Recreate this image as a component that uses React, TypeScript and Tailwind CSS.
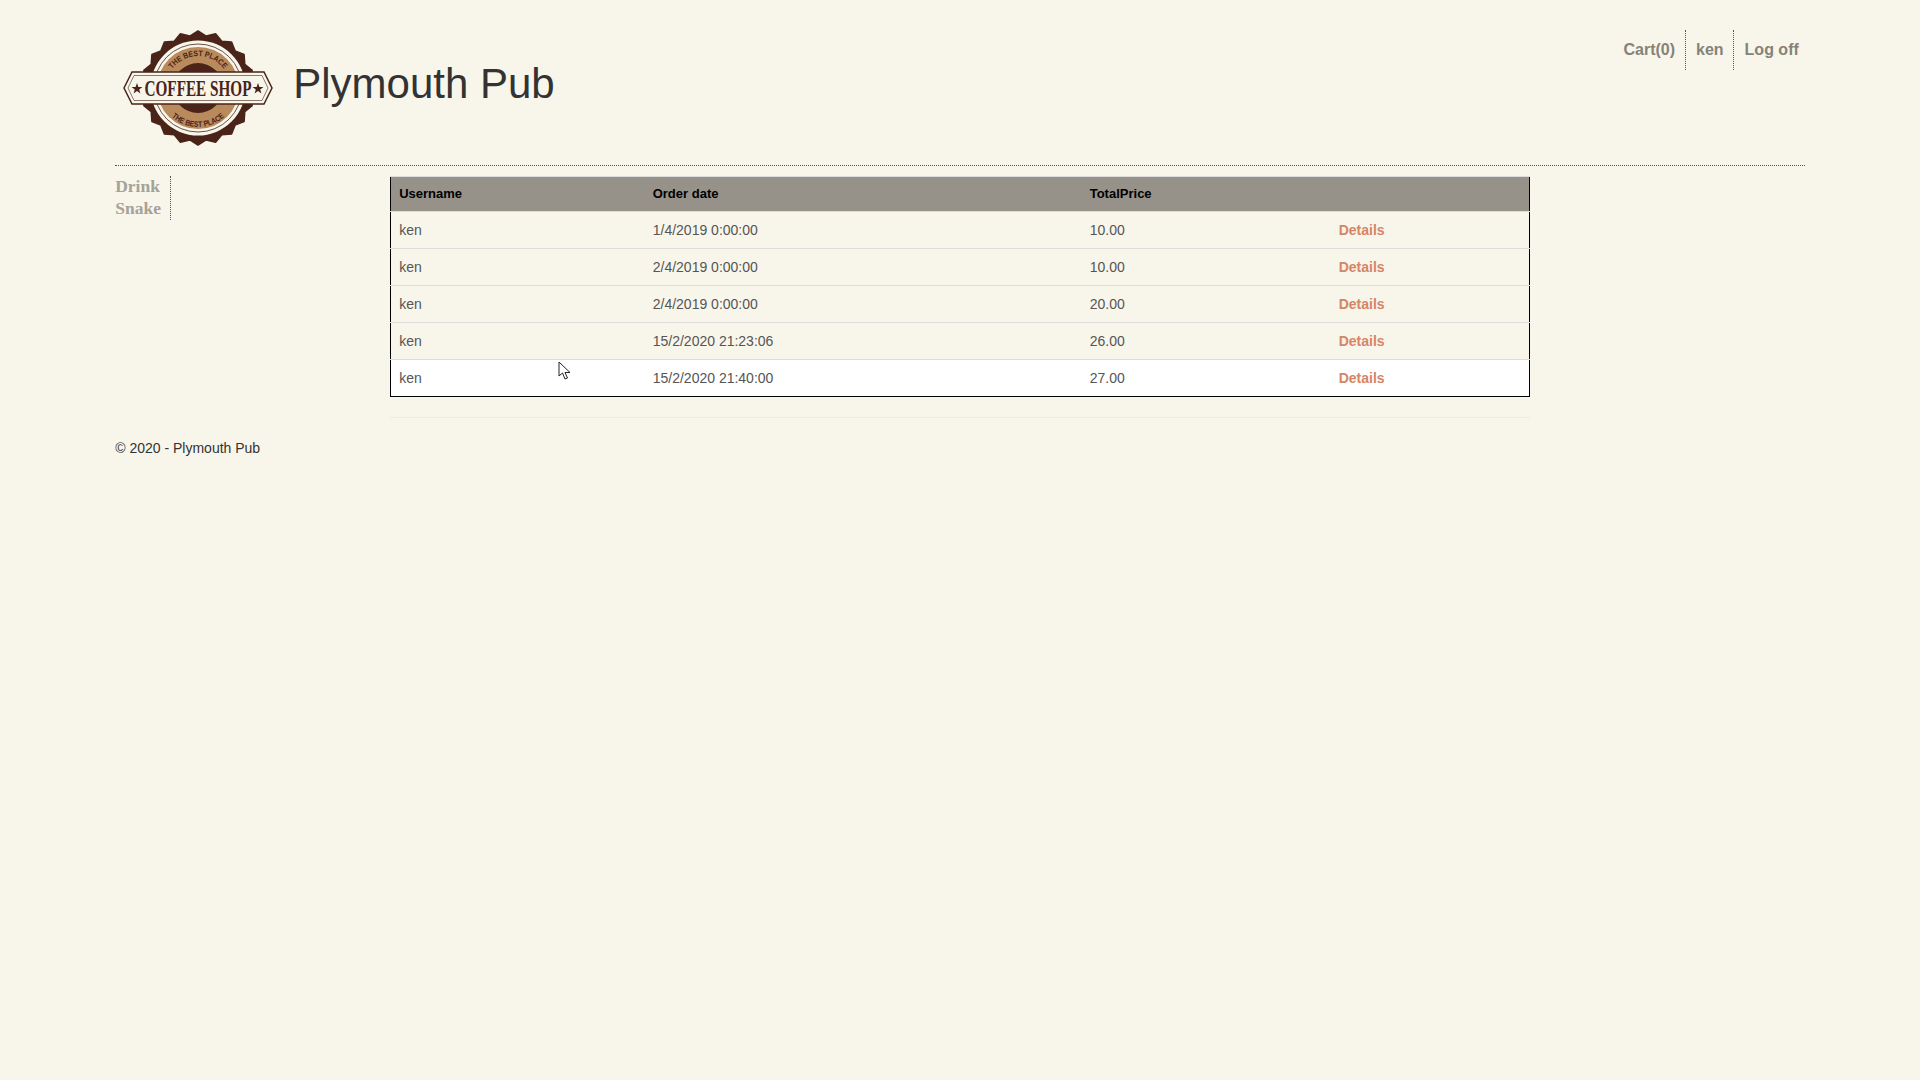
import React from 'react';

const orders = [
  { user: 'ken', date: '1/4/2019 0:00:00', total: '10.00' },
  { user: 'ken', date: '2/4/2019 0:00:00', total: '10.00' },
  { user: 'ken', date: '2/4/2019 0:00:00', total: '20.00' },
  { user: 'ken', date: '15/2/2020 21:23:06', total: '26.00' },
  { user: 'ken', date: '15/2/2020 21:40:00', total: '27.00' },
];

const CoffeeLogo = () => {
  const teeth = Array.from({ length: 40 }, (_, i) => {
    const a = (i / 40) * Math.PI * 2;
    const r = i % 2 === 0 ? 57 : 52.5;
    return `${(75 + Math.cos(a) * r).toFixed(1)},${(58 + Math.sin(a) * r).toFixed(1)}`;
  }).join(' ');
  return (
    <svg width="150" height="118" viewBox="0 0 150 118" className="shrink-0">
      <defs>
        <path id="arcTop" d="M 43 58 A 32 32 0 0 1 107 58" />
        <path id="arcBottom" d="M 36 58 A 39 39 0 0 0 114 58" />
      </defs>
      <polygon points={teeth} fill="#4a2419" stroke="#4a2419" strokeWidth="1.5" strokeLinejoin="round" />
      <circle cx="75" cy="58" r="47.5" fill="#f8f6eb" />
      <circle cx="75" cy="58" r="44" fill="none" stroke="#4a2419" strokeWidth="0.8" />
      <circle cx="75" cy="58" r="41" fill="#b98a5c" />
      <circle cx="75" cy="58" r="25" fill="#4a2419" />
      <text fontFamily="'Liberation Sans', sans-serif" fontWeight="700" fontSize="8" fill="#4a2419">
        <textPath href="#arcTop" startOffset="50%" textAnchor="middle" textLength="60" lengthAdjust="spacingAndGlyphs">THE BEST PLACE</textPath>
      </text>
      <text fontFamily="'Liberation Sans', sans-serif" fontWeight="700" fontSize="8" fill="#4a2419">
        <textPath href="#arcBottom" startOffset="50%" textAnchor="middle" textLength="58" lengthAdjust="spacingAndGlyphs">THE BEST PLACE</textPath>
      </text>
      <polygon points="1,58 9,42 141,42 149,58 141,74 9,74" fill="#f8f6eb" stroke="#4a2419" strokeWidth="1.5" />
      <polygon points="5,58 11,45.5 139,45.5 145,58 139,70.5 11,70.5" fill="none" stroke="#4a2419" strokeWidth="0.6" />
      <text x="75" y="66" textAnchor="middle" fontFamily="'Liberation Serif', serif" fontWeight="700" fontSize="24" fill="#4a2419" textLength="107" lengthAdjust="spacingAndGlyphs">COFFEE SHOP</text>
      <polygon points="14,53 15.4,57 19.5,57 16.2,59.5 17.4,63.5 14,61 10.6,63.5 11.8,59.5 8.5,57 12.6,57" fill="#4a2419" />
      <polygon points="135,53 136.4,57 140.5,57 137.2,59.5 138.4,63.5 135,61 131.6,63.5 132.8,59.5 129.5,57 133.6,57" fill="#4a2419" />
    </svg>
  );
};

const App: React.FC = () => {
  return (
    <div className="relative min-h-[1080px] bg-[#f8f6eb] font-['Liberation_Sans',Arial,sans-serif] text-[14px] text-[#333]">
      <div className="mx-auto w-[88%]">
        <header className="flex h-[166px] justify-between border-b border-dotted border-[#555]">
          <div className="flex items-start pl-2 pt-[30px]">
            <CoffeeLogo />
            <h1 className="ml-[20px] mt-[29px] text-[42px] leading-[50px] text-[#333]">Plymouth Pub</h1>
          </div>
          <nav className="flex items-start pt-[30px] text-[16px] font-bold text-[#85827a]">
            <a className="flex h-[40px] items-center border-r border-dotted border-[#555] px-[10px]">Cart(0)</a>
            <a className="flex h-[40px] items-center border-r border-dotted border-[#555] pl-[10px] pr-[9px]">ken</a>
            <a className="flex h-[40px] items-center pl-[11px] pr-[6px]">Log off</a>
          </nav>
        </header>

        <div className="flex pt-[10px]">
          <aside className="w-[275px] shrink-0">
            <ul className="inline-block border-r border-dotted border-[#555] pb-px pr-[9px] font-['Liberation_Serif',serif] text-[17.5px] font-bold leading-[22px] text-[#a5a298]">
              <li className="-mt-px">Drink</li>
              <li>Snake</li>
            </ul>
          </aside>
          <main className="w-[1140px]">
            <table className="w-full table-fixed border-collapse border border-black">
              <thead>
                <tr className="h-[35px] border-y border-[#ddd] bg-[#96928a] text-left text-[13px] font-bold text-black">
                  <th className="w-[254px] pl-[8px]">Username</th>
                  <th className="w-[437px] pl-[8px]">Order date</th>
                  <th className="w-[249px] pl-[8px]">TotalPrice</th>
                  <th></th>
                </tr>
              </thead>
              <tbody>
                {orders.map((o, i) => (
                  <tr key={i} className={`h-[37px] border-b border-[#ddd] text-[#555] last:border-b-black ${i === orders.length - 1 ? 'bg-white' : ''}`}>
                    <td className="pl-[8px]">{o.user}</td>
                    <td className="pl-[8px]">{o.date}</td>
                    <td className="pl-[8px]">{o.total}</td>
                    <td className="pl-[8px] font-bold text-[#d68565]">Details</td>
                  </tr>
                ))}
              </tbody>
            </table>
            <div className="mt-[20px] h-px bg-[#efece0]" />
          </main>
        </div>

        <footer className="mt-[20px]">© 2020 - Plymouth Pub</footer>
      </div>

      {/* mouse pointer caught in the screenshot */}
      <svg className="absolute left-[558px] top-[361px]" width="14" height="20" viewBox="0 0 14 20">
        <path d="M1 1 L1 15 L4.5 12 L7 18 L9.5 17 L7 11.5 L12 11.5 Z" fill="#fff" stroke="#222" strokeWidth="1" />
      </svg>
    </div>
  );
};

export default App;
